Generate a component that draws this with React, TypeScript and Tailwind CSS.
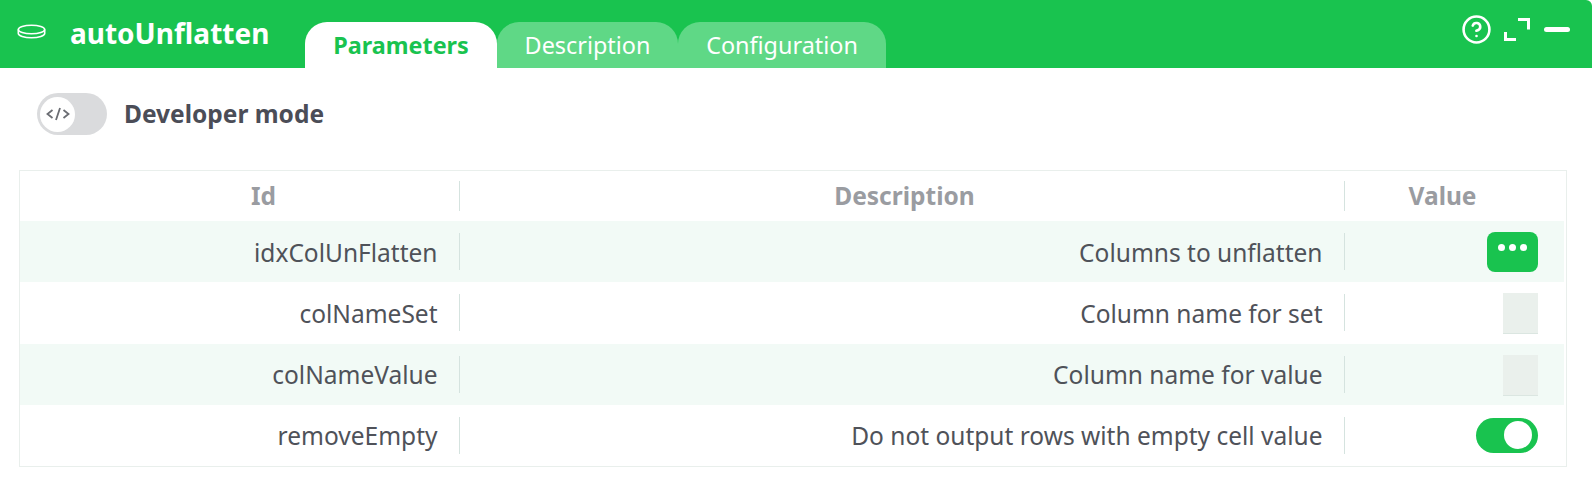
import { CircleHelp } from "lucide-react";

const rows = [
  { id: "idxColUnFlatten", description: "Columns to unflatten", value: "button" },
  { id: "colNameSet", description: "Column name for set", value: "empty" },
  { id: "colNameValue", description: "Column name for value", value: "empty" },
  { id: "removeEmpty", description: "Do not output rows with empty cell value", value: "toggle" },
];

function Divider({ className }: { className: string }) {
  return <span className={`w-px shrink-0 bg-[#d5e3df] ${className}`} />;
}

function ValueCell({ kind }: { kind: string }) {
  if (kind === "button") {
    return (
      <div className="flex h-[40px] w-[51px] items-start justify-center gap-[4px] rounded-[8px] bg-[#19c34f] pt-[12px]">
        <span className="size-[7px] rounded-full bg-white" />
        <span className="size-[7px] rounded-full bg-white" />
        <span className="size-[7px] rounded-full bg-white" />
      </div>
    );
  }
  if (kind === "toggle") {
    return (
      <div className="flex h-[35px] w-[62px] items-center justify-end rounded-full bg-[#19c34f] pr-[6px]">
        <span className="size-[28px] rounded-full bg-white" />
      </div>
    );
  }
  return <div className="mt-[2px] h-[41px] w-[35px] border-b border-[#dbe6e1] bg-[#eaf0ec]" />;
}

export default function App() {
  return (
    <div className="h-[486px] w-[1592px] overflow-hidden bg-white font-['Noto_Sans',sans-serif]">
      {/* Header */}
      <div className="flex h-[68px] items-end rounded-tr-[6px] bg-[#19c34f] pr-[22px]">
        <div className="flex h-full w-[305px] items-start pl-[17px]">
          <svg className="mt-[24px]" width="29" height="15" viewBox="0 0 29 15" fill="none" stroke="white" strokeWidth="1.6">
            <ellipse cx="14.5" cy="5.5" rx="13.2" ry="4.2" />
            <path d="M1.3 5.5v4c0 2.3 5.900 4.200 13.200 4.200s13.200-1.900 13.200-4.200v-4" />
          </svg>
          <span className="ml-[24px] mt-[14px] text-[28px] leading-[38px] font-bold text-white">autoUnflatten</span>
        </div>
        <div className="flex h-[46px] text-[23.4px] leading-[46px]">
          <div className="w-[192px] rounded-t-[22px] bg-white text-center font-bold text-[#19c34f]">Parameters</div>
          <div className="w-[181px] rounded-t-[22px] bg-[#5fd886] text-center text-white">Description</div>
          <div className="w-[208px] rounded-t-[22px] bg-[#5fd886] text-center text-white">Configuration</div>
        </div>
        <div className="ml-auto flex h-full items-start text-white">
          <CircleHelp className="mt-[14px]" size={31} strokeWidth={2} />
          <svg className="ml-[12px] mt-[18px]" width="26" height="23" viewBox="0 0 26 23" fill="none" stroke="white" strokeWidth="3">
            <path d="M14 1.500h10.500v10" />
            <path d="M1.500 14v7.500h10.500" />
          </svg>
          <span className="ml-[14px] mt-[27px] h-[5px] w-[26px] rounded-full bg-white" />
        </div>
      </div>

      {/* Developer mode */}
      <div className="flex h-[102px] items-start pl-[37px] pt-[25px]">
        <div className="flex h-[42px] w-[70px] items-center rounded-full bg-[#dadbdd] pl-[3px]">
          <div className="flex size-[35px] items-center justify-center rounded-full bg-white">
            <svg width="24" height="14" viewBox="0 0 24 14" fill="none" stroke="#6b6d73" strokeWidth="1.8">
              <path d="M6.500 3 1.500 7l5 4" />
              <path d="M14 1 10 13" />
              <path d="M17.500 3l5 4-5 4" />
            </svg>
          </div>
        </div>
        <span className="ml-[17px] text-[24.5px] leading-[42px] font-bold text-[#4b4d57]">Developer mode</span>
      </div>

      {/* Parameters table */}
      <div className="ml-[19px] mr-[25px] h-[297px] border border-[#e9efec] pr-[2px] text-[24.5px] text-[#4f5259]">
        <div className="flex h-[50px] items-start pt-[10px] text-[#9a9ca1]">
          <div className="w-[439px] pl-[48px] pt-[1px] text-center leading-[28px] font-bold">Id</div>
          <Divider className="h-[30px]" />
          <div className="w-[884px] pl-[5px] pt-[1px] text-center leading-[28px] font-bold">Description</div>
          <Divider className="h-[30px]" />
          <div className="flex-1 pr-[24px] pt-[1px] text-center leading-[28px] font-bold">Value</div>
        </div>
        {rows.map((row, i) => (
          <div key={row.id} className={`flex h-[61.25px] items-center ${i % 2 === 0 ? "bg-[#f2faf6]" : "bg-white"}`}>
            <div className="w-[417.5px] pt-[2px] text-right leading-[32px]">{row.id}</div>
            <Divider className="ml-[21.5px] h-[37px]" />
            <div className="w-[862.5px] pt-[2px] text-right leading-[32px]">{row.description}</div>
            <Divider className="ml-[21.5px] h-[37px]" />
            <div className="flex flex-1 justify-end pr-[26px]">
              <ValueCell kind={row.value} />
            </div>
          </div>
        ))}
      </div>
    </div>
  );
}
